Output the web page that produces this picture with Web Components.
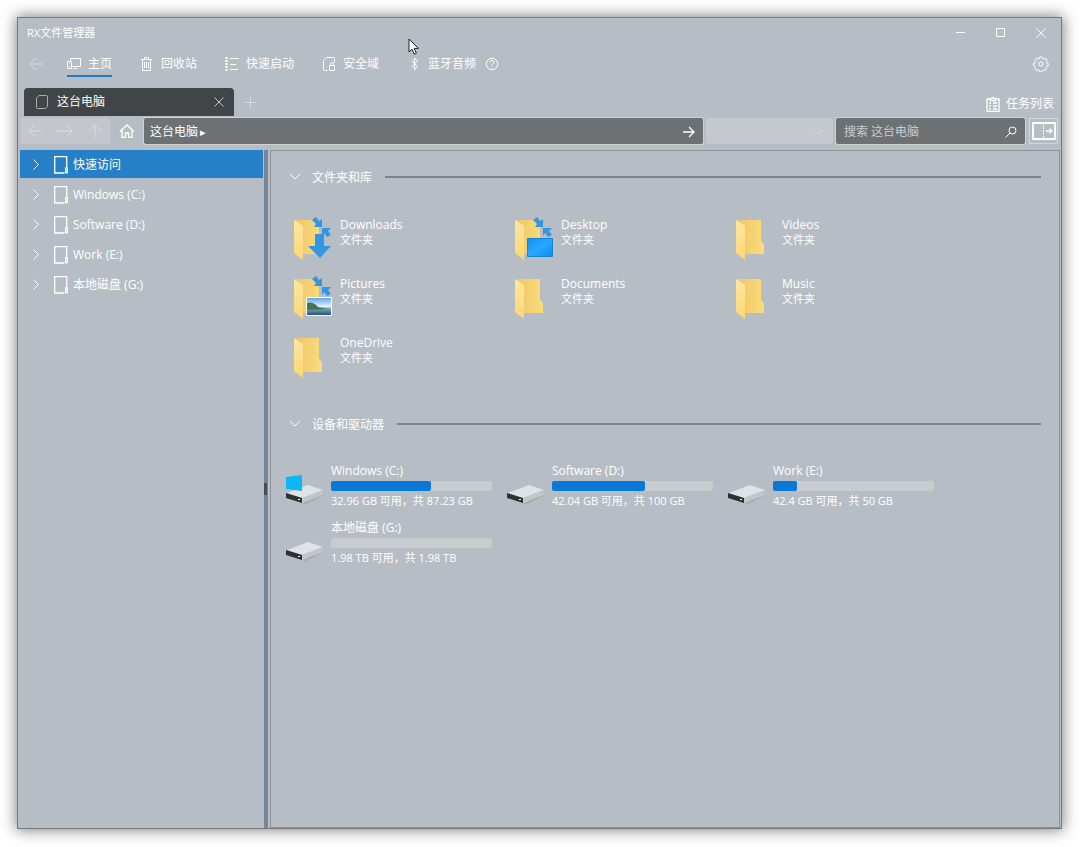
<!DOCTYPE html>
<html lang="zh-CN">
<head>
<meta charset="utf-8">
<title>RX文件管理器</title>
<style>
  html { height: 100%; background: #fff; }
  body {
    margin: 0; min-height: 100vh; box-sizing: border-box; padding: 17px 18px 18px 17px;
    display: flex; color: #fff;
    font: 12px/16px "Open Sans", "Noto Sans CJK SC", sans-serif;
  }
</style>
</head>
<body>
<rx-window>
  <rx-titlebar slot="top">RX文件管理器</rx-titlebar>
  <rx-nav slot="top"></rx-nav>
  <rx-tabs slot="top">这台电脑</rx-tabs>
  <rx-address slot="top" path="这台电脑"></rx-address>
  <rx-tree slot="side">
    <rx-node selected>快速访问</rx-node>
    <rx-node>Windows (C:)</rx-node>
    <rx-node>Software (D:)</rx-node>
    <rx-node>Work (E:)</rx-node>
    <rx-node>本地磁盘 (G:)</rx-node>
  </rx-tree>
  <rx-section heading="文件夹和库">
    <rx-folder kind="downloads">Downloads</rx-folder>
    <rx-folder kind="desktop">Desktop</rx-folder>
    <rx-folder>Videos</rx-folder>
    <rx-folder kind="pictures">Pictures</rx-folder>
    <rx-folder>Documents</rx-folder>
    <rx-folder>Music</rx-folder>
    <rx-folder>OneDrive</rx-folder>
  </rx-section>
  <rx-section heading="设备和驱动器" kind="drives">
    <rx-drive system used="62" info="32.96 GB 可用，共 87.23 GB">Windows (C:)</rx-drive>
    <rx-drive used="58" info="42.04 GB 可用，共 100 GB">Software (D:)</rx-drive>
    <rx-drive used="15" info="42.4 GB 可用，共 50 GB">Work (E:)</rx-drive>
    <rx-drive used="0" info="1.98 TB 可用，共 1.98 TB">本地磁盘 (G:)</rx-drive>
  </rx-section>
</rx-window>

<script>
const RESET = `
  :host { box-sizing: border-box; }
  *, *::before { box-sizing: border-box; }
  button, input, select { font: inherit; color: inherit; background: none; border: 0; padding: 0; margin: 0; border-radius: 0; }
  button { display: flex; align-items: center; white-space: nowrap; }
`;

const stroke = (w, h, body) =>
  `<svg width="${w}" height="${h}" viewBox="0 0 ${w} ${h}" fill="none" stroke="currentColor" stroke-width="1">${body}</svg>`;

const ICONS = {
  min: stroke(10, 10, '<path d="M0 4.5h9"/>'),
  max: stroke(10, 10, '<path d="M.5 .5h8v8h-8z"/>'),
  close: stroke(10, 10, '<path d="M.5 .5l9 9M9.5 .5l-9 9"/>'),
  back: stroke(14, 14, '<path d="M14 7H1M7 1L1 7l6 6"/>'),
  forward: stroke(16, 14, '<path d="M0 7h15M9 1l6 6-6 6"/>'),
  up: stroke(14, 14, '<path d="M7 14V1M1 7l6-6 6 6"/>'),
  home: stroke(16, 14, '<path stroke-width="1.3" d="M1 7.5L8 1l7 6.500M3 6v7.300h3.500V9h3v4.300H13V6"/>'),
  pc: stroke(14, 14, '<path d="M3.500 4V1.500h10v8h-9M.5 4.500h4v7h-4zM2 6.500h1M2 9.500h1M6 11.500h4"/>'),
  bin: stroke(14, 14, '<path d="M1 2.500h11M4.500 2.500V.5h4v2M2.500 2.500v11h8v-11M4.500 5v6M6.500 5v6M8.500 5v6"/>'),
  list: stroke(14, 14, '<path d="M5 1.500h9M5 7.500h6M5 12.500h8"/><path stroke-dasharray="2 1" stroke-width="2" d="M1.500 0v14"/>'),
  safe: stroke(14, 14, '<path d="M5.500 13.500h-3a1 1 0 0 1-1-1v-9l3-3h7a1 1 0 0 1 1 1v4M7.500 8.500h5v5h-5zM8.500 8.500V7a1.500 1.500 0 0 1 3 0v1.500"/>'),
  bt: stroke(14, 14, '<path d="M4.500 3.500l6 6L7.500 13V1l3 3-6 6"/>'),
  help: stroke(14, 14, '<circle cx="7" cy="7" r="5.700"/><path d="M5 5.500a2 2 0 1 1 2.500 1.800Q7 7.600 7 8.500M7 9.500v1"/>'),
  gear: stroke(16, 16, '<circle cx="8" cy="8" r="2.200"/><path stroke-linejoin="round" d="M6.300 2.600L6.700 1h2.600l.4 1.600 1.300.5 1.500-.8 1.600 1.900-.8 1.400.5 1.400 1.500.4-.2 2.400-1.500.4-.6 1.300.8 1.400-1.900 1.700-1.400-.9-1.100.6-.4 1.500H6.600l-.4-1.500-1.200-.6-1.500.9-1.800-1.800.9-1.400-.5-1.200-1.500-.5V7.300l1.500-.4.5-1.300-.8-1.500 1.700-1.800 1.500.8z"/>'),
  tasks: stroke(14, 16, '<path stroke-width="1.300" d="M4.500 3H1v12.300h12V3H9.500M4.500 4.500V2.300H6a1 1 0 0 1 2 0h1.500v2.200zM3 7h2M7 7h4M3 10h2M7 10h4M3 13h2M7 13h4"/>'),
  page: stroke(12, 14, '<path d="M3 .5h7.500a1 1 0 0 1 1 1v10l-2 2h-8a1 1 0 0 1-1-1V3z"/>'),
  plus: stroke(12, 12, '<path d="M0 6.500h11M5.500 1v11"/>'),
  go: stroke(12, 12, '<path stroke-width="1.300" d="M0 6h11M6 1l5 5-5 5"/>'),
  chev: stroke(12, 12, '<path d="M1 3l5 5 5-5"/>'),
  right: stroke(8, 12, '<path d="M1.500 .5l5 5-5 5"/>'),
  search: stroke(12, 12, '<circle cx="7.500" cy="4.500" r="3.500"/><path d="M5 7L.5 11.500"/>'),
  split: stroke(26, 20, '<path stroke-width="2" d="M2 2h22v16H2z"/><path stroke-dasharray="2 1" d="M12.500 3v14"/><path stroke-width="1.300" d="M15 10h6M18.500 7.500L21 10l-2.500 2.500"/>'),
  disk: stroke(16, 18, '<path stroke-width="1.300" d="M11.500 17H1.700V.7h12V11"/><path fill="currentColor" fill-opacity=".6" d="M12.500 11.500h2v5.500h-2z"/>'),
};

const define = (name, render) => customElements.define(name, class extends HTMLElement {
  connectedCallback() {
    if (this.shadowRoot) return;
    const t = document.createElement('template');
    t.innerHTML = render(this);
    this.attachShadow({ mode: 'open' }).append(t.content.cloneNode(true));
  }
});

define('rx-icon', el => `<style>:host{display:inline-flex;flex:none} svg{display:block}</style>${ICONS[el.getAttribute('name')]}`);

define('rx-window', () => `<style>${RESET}
  :host { flex: 1; min-width: 0; display: flex; flex-direction: column; position: relative; background: #b7bdc5;
    border: 1px solid #77797c; box-shadow: 0 0 14px 1px rgba(0,0,0,.5); }
  .body { flex: 1; display: flex; padding-left: 2px; }
  aside { width: 244px; flex: none; }
  .bar { width: 4px; background: #75869a; display: flex; align-items: center; }
  .grip { width: 3px; height: 12px; background: #454c55; }
  main { flex: 1; min-width: 0; margin: 0 1px 0 2px; border: 1px solid #8f9398; padding-top: 16px;
    display: flex; flex-direction: column; gap: 36px; }
  .cursor { position: absolute; left: 390px; top: 20px; }
</style>
<slot name="top"></slot>
<div class="body"><aside><slot name="side"></slot></aside>
<div class="bar" role="separator"><div class="grip"></div></div>
<main><slot></slot></main></div>
<svg class="cursor" width="12" height="18" viewBox="0 0 12 18"><path d="M1 1v13l3-2.800 2.200 5 2.200-1-2.200-4.800H10.500z" fill="#fff" stroke="#222"/></svg>`);

define('rx-titlebar', () => `<style>${RESET}
  :host { display: flex; height: 30px; align-items: center; padding-left: 9px; }
  h1 { flex: 1; margin: 0; font: inherit; font-size: 11px; }
  button { width: 40px; height: 30px; justify-content: center; }
</style><h1><slot></slot></h1>
<button aria-label="最小化"><rx-icon name="min"></rx-icon></button>
<button aria-label="最大化"><rx-icon name="max"></rx-icon></button>
<button aria-label="关闭"><rx-icon name="close"></rx-icon></button>`);

define('rx-nav', () => `<style>${RESET}
  :host { display: flex; height: 40px; align-items: center; padding: 0 12px 8px 11px; }
  .back { width: 14px; opacity: .45; margin-right: 24px; }
  nav { display: flex; gap: 28px; }
  nav button { height: 26px; gap: 7px; border: solid transparent; border-width: 2px 0; }
  nav .on { border-bottom-color: #1c7cc9; }
  .help { margin-left: 9px; }
  .gear { margin-left: auto; }
</style><button class="back" aria-label="返回"><rx-icon name="back"></rx-icon></button>
<nav>
<button class="on"><rx-icon name="pc"></rx-icon>主页</button>
<button><rx-icon name="bin"></rx-icon>回收站</button>
<button><rx-icon name="list"></rx-icon>快速启动</button>
<button><rx-icon name="safe"></rx-icon>安全域</button>
<button><rx-icon name="bt"></rx-icon>蓝牙音频</button>
</nav>
<button class="help" aria-label="帮助"><rx-icon name="help"></rx-icon></button>
<button class="gear" aria-label="设置"><rx-icon name="gear"></rx-icon></button>`);

define('rx-tabs', () => `<style>${RESET}
  :host { display: flex; height: 28px; align-items: center; padding: 0 7px 0 6px; }
  .tab { width: 210px; height: 28px; display: flex; align-items: center; background: #424547; border-radius: 4px 4px 0 0; padding: 0 10px 0 12px; gap: 9px; }
  .tab .x { margin-left: auto; color: #c4c8cc; }
  .page { color: #a9adb1; }
  .add { margin-left: 11px; opacity: .45; }
  .tasks { margin: 4px 0 0 auto; gap: 6px; }
</style><div class="tab"><rx-icon class="page" name="page"></rx-icon><slot></slot>
<button class="x" aria-label="关闭标签"><rx-icon name="close"></rx-icon></button></div>
<button class="add" aria-label="新建标签"><rx-icon name="plus"></rx-icon></button>
<button class="tasks"><rx-icon name="tasks"></rx-icon>任务列表</button>`);

define('rx-address', el => `<style>${RESET}
  :host { display: flex; height: 34px; padding: 2px 3px 6px 2px; gap: 3px; }
  .hist { display: flex; background: #c3c7cb; }
  .hist button { width: 30px; justify-content: center; color: #dadde0; }
  .home { width: 28px; justify-content: center; }
  .path, .search { display: flex; align-items: center; background: #6d7174; border-radius: 2px; box-shadow: 0 0 0 1px #ced1d4; padding: 2px 8px 0 6px; }
  .path { flex: 1; min-width: 0; }
  .path span { font-size: 11px; margin-left: 2px; flex: 1; }
  .combo { position: relative; display: flex; width: 127px; }
  select { appearance: none; width: 100%; background: #c5c8cc; border-radius: 2px; opacity: 1; }
  .combo rx-icon { position: absolute; right: 9px; top: 8px; color: #d4d7da; pointer-events: none; }
  .search { width: 189px; padding-left: 8px; color: #fff; }
  input { flex: 1; min-width: 0; outline: 0; }
  input::placeholder { color: #c9cccf; opacity: 1; }
  .split { width: 29px; justify-content: center; border: 1px solid #d3d6d9; margin-left: 1px; }
</style>
<div class="hist"><button aria-label="后退"><rx-icon name="back"></rx-icon></button><button aria-label="前进"><rx-icon name="forward"></rx-icon></button><button aria-label="向上"><rx-icon name="up"></rx-icon></button></div>
<button class="home" aria-label="主目录"><rx-icon name="home"></rx-icon></button>
<div class="path"><button>${el.getAttribute('path')}</button><span>▸</span><button aria-label="转到"><rx-icon name="go"></rx-icon></button></div>
<div class="combo"><select disabled aria-label="历史"></select><rx-icon name="chev"></rx-icon></div>
<div class="search"><input type="text" aria-label="搜索" placeholder="搜索 ${el.getAttribute('path')}"><button aria-label="搜索"><rx-icon name="search"></rx-icon></button></div>
<button class="split" aria-label="预览窗格"><rx-icon name="split"></rx-icon></button>`);

define('rx-tree', () => `<style>${RESET}
  :host { display: flex; flex-direction: column; gap: 2px; padding-right: 1px; }
</style><slot></slot>`);

define('rx-node', () => `<style>${RESET}
  :host { display: block; }
  :host([selected]) { background: #2680c7; }
  button { width: 100%; height: 28px; padding: 1px 12px 0; }
  .disk { margin: 0 4px 0 13px; }
</style><button><rx-icon name="right"></rx-icon><rx-icon class="disk" name="disk"></rx-icon><slot></slot></button>`);

define('rx-section', el => `<style>${RESET}
  :host { display: block; padding-right: 18px; }
  .head { display: flex; align-items: center; height: 20px; padding-left: 18px; }
  h2 { font: inherit; margin: 1px 13px 0 11px; }
  .rule { flex: 1; height: 2px; background: #7e8389; }
  .grid { display: grid; grid-template-columns: repeat(auto-fill, 221px); gap: 16px 0; padding: 30px 0 0 23px; }
  :host([kind=drives]) .grid { row-gap: 12px; padding: 29px 0 0 15px; }
</style><div class="head"><button aria-label="折叠"><rx-icon name="chev"></rx-icon></button><h2>${el.getAttribute('heading')}</h2><div class="rule"></div></div>
<div class="grid"><slot></slot></div>`);

const ARROWS = '<path fill="#3396e4" d="M18 3l4-3 4 4 3-3v10H19l3-3zM38 19l-4 0-4-4 0 5-2-9 10 0-3 3 4 4z"/>';
const EXTRA = {
  downloads: '<path fill="#3396e4" d="M18 3l4-3 3 4 3-2v8h-8l2-3zM37 18l-4 2-3-4-2 3V11h9l-3 3zM21 17h9v12h7L26 41 14 29h7z"/>',
  desktop: '<path fill="#3396e4" d="M18 3l4-3 3 4 3-2v8h-8l2-3zM37 18l-4 2-3-4-2 3V11h9l-3 3z"/><path fill="url(#s)" stroke="#1684d8" d="M12.500 21.500h25v18h-25z"/>',
  pictures: '<path fill="#3396e4" d="M18 3l4-3 3 4 3-2v8h-8l2-3zM37 18l-4 2-3-4-2 3V11h9l-3 3z"/><path fill="url(#p)" stroke="#fff" d="M12.500 21.500h25v18h-25z"/><path fill="#42744f" d="M13 27q6-2 11 4l9 2-20 1z"/>',
};
define('rx-folder', el => `<style>${RESET}
  :host { display: flex; height: 43px; gap: 7px; }
  svg { flex: none; }
  p { margin: 0; line-height: 15px; }
  .kind { font-size: 11px; }
</style>
<svg width="39" height="43" viewBox="0 0 39 43"><defs>
<linearGradient id="a"><stop stop-color="#edc668"/><stop offset="1" stop-color="#fbdc7b"/></linearGradient>
<linearGradient id="b" x2="0" y2="1"><stop stop-color="#ffe7a3"/><stop offset="1" stop-color="#fbd772"/></linearGradient>
<linearGradient id="s" x2="1" y2="1"><stop stop-color="#0b93f6"/><stop offset=".5" stop-color="#28a8ff"/><stop offset="1" stop-color="#0c8df0"/></linearGradient>
<linearGradient id="p" x2="0" y2="1"><stop stop-color="#5aa0ea"/><stop offset=".5" stop-color="#e4f2fb"/><stop offset=".6" stop-color="#7fa9bd"/><stop offset="1" stop-color="#244e76"/></linearGradient></defs>
<path fill="url(#a)" d="M1 3h24v21l3 3v10H9z"/><path fill="url(#b)" d="M0 3l9 6v34l-9-7z"/>${EXTRA[el.getAttribute('kind')] || ''}</svg>
<div><p><slot></slot></p><p class="kind">文件夹</p></div>`);

define('rx-drive', el => `<style>${RESET}
  :host { display: flex; gap: 7px; height: 45px; }
  div { display: grid; grid-template-rows: 16px 10px 16px; row-gap: 2px; width: 161px; align-content: start; }
  .info { font-size: 11px; white-space: nowrap; }
  progress { appearance: none; width: 161px; height: 10px; border: 0; display: block; }
  progress::-webkit-progress-bar { background: #c8cbcf; border-radius: 2px; }
  progress::-webkit-progress-value { background: #0a78d7; border-radius: 2px; }
</style>
<svg width="38" height="43" viewBox="0 0 38 43"><path fill="#a5abb3" d="M17 40l20-9 1 1-20 10z"/><path fill="#e0e3e5" d="M1 30l21-8 15 5-21 8z"/><path fill="#c3c6c9" d="M16 35l21-8v5l-21 8z"/><path fill="#2e3032" d="M0 30l16 5v5L0 35z"/><path fill="#fff" d="M12 36h2v1h-2z"/>
${el.hasAttribute('system') ? '<path fill="#0cb8f4" d="M0 14l16-2v16L0 26z"/>' : ''}</svg>
<div><label for="use"><slot></slot></label><progress id="use" max="100" value="${el.getAttribute('used')}"></progress><span class="info">${el.getAttribute('info')}</span></div>`);
</script>
</body>
</html>
